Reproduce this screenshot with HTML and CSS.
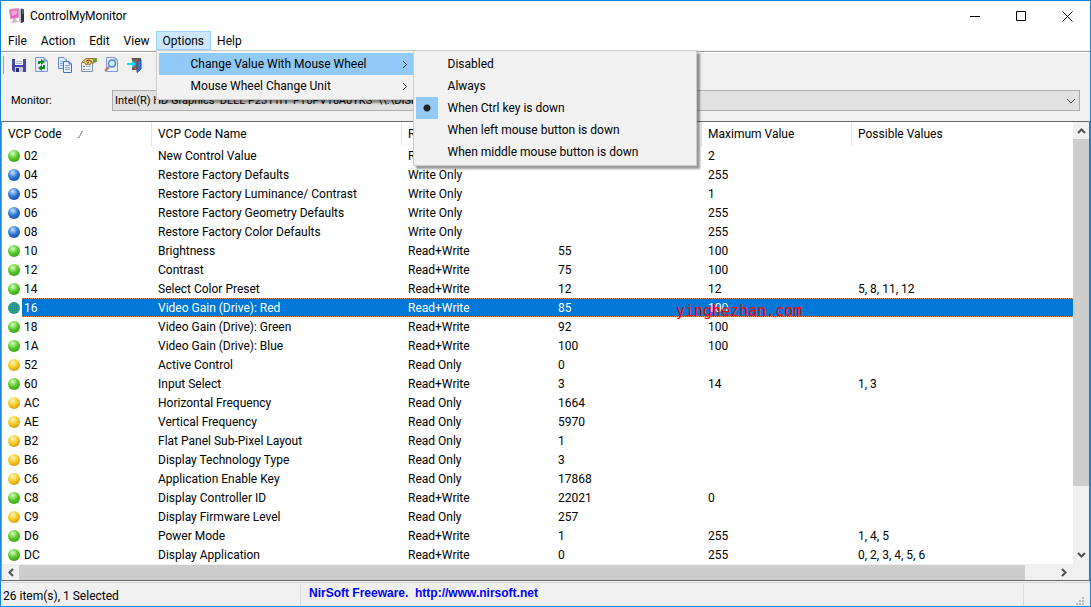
FILE: index.html
```html
<!DOCTYPE html>
<html lang="en">
<head>
    <meta charset="UTF-8">
    <meta name="viewport" content="width=device-width, initial-scale=1.0">
    <title>ControlMyMonitor</title>
    <link rel="stylesheet" href="styles.css">
</head>
<body>

    <header class="title-bar">
        <svg class="app-icon" width="16" height="16" viewBox="0 0 16 16">
            <path d="M0.5 1.5L9.5 0.5V9.5L1.5 11Z" fill="#f060b8" stroke="#dc9cc8"/>
            <path d="M2 3L8 2V6L3 8Z" fill="#f8a0dc"/>
            <path d="M4 11L7 10.5L8 13L10 14L3 15L2 14L4 13Z" fill="#d0b4c8"/>
            <path d="M10 1L12 0.5V15L10 14Z" fill="#b9c6c9"/>
            <path d="M12 0.5L15 1.5V14L12 15Z" fill="#243a4c"/>
            <path d="M13 3H14.5M13 5H14.5" stroke="#58b6a0"/>
        </svg>
        <h1>ControlMyMonitor</h1>
        <div class="window-buttons">
            <button aria-label="Minimize"><svg width="11" height="11"><path d="M0 5.5H10" stroke="#000"/></svg></button>
            <button aria-label="Maximize"><svg width="11" height="11"><path d="M0.5 0.5H9.5V9.5H0.5Z" fill="none" stroke="#000"/></svg></button>
            <button aria-label="Close"><svg width="11" height="11"><path d="M0.5 0.5L10.5 10.5M10.5 0.5L0.5 10.5" stroke="#000"/></svg></button>
        </div>
    </header>

    <nav class="menu-bar">
        <button>File</button>
        <button>Action</button>
        <button>Edit</button>
        <button>View</button>
        <div class="menu-holder">
            <button class="open">Options</button>
            <ul class="menu">
                <li class="active">
                    <button>Change Value With Mouse Wheel</button>
                    <svg class="chevron" width="6" height="9"><path d="M1 1L4.5 4.5L1 8" fill="none" stroke="#222"/></svg>
                    <ul class="menu submenu">
                        <li><button>Disabled</button></li>
                        <li><button>Always</button></li>
                        <li class="checked"><button>When Ctrl key is down</button></li>
                        <li><button>When left mouse button is down</button></li>
                        <li><button>When middle mouse button is down</button></li>
                    </ul>
                </li>
                <li>
                    <button>Mouse Wheel Change Unit</button>
                    <svg class="chevron" width="6" height="9"><path d="M1 1L4.5 4.5L1 8" fill="none" stroke="#222"/></svg>
                </li>
            </ul>
        </div>
        <button>Help</button>
    </nav>

    <div class="toolbar">
        <button aria-label="Save">
            <svg width="16" height="16" viewBox="0 0 16 16">
                <path d="M1 2H15V15H3L1 13Z" fill="#4646a8"/>
                <path d="M4 2H12V8H4Z" fill="#f4f4fa"/>
                <path d="M5 4.5H11M5 6.5H11" stroke="#b4b4cc"/>
                <path d="M4 10H12V15H4Z" fill="#c9c9dc"/>
                <path d="M5 11H8V15H5Z" fill="#2a2a7c"/>
            </svg>
        </button>
        <button aria-label="Refresh">
            <svg width="16" height="16" viewBox="0 0 16 16">
                <path d="M1.5 0.5H10L13.5 4V14.5H1.5Z" fill="#e0ecfc" stroke="#7d9ad6"/>
                <path d="M10 0.5V4H13.5" fill="#9bb8ea" stroke="#6f8fd0"/>
                <path d="M5 7V5H8" fill="none" stroke="#128a20" stroke-width="2"/>
                <path d="M7 2L11 5L7 8Z" fill="#128a20"/>
                <path d="M10 8V11H7" fill="none" stroke="#128a20" stroke-width="2"/>
                <path d="M8 8L4 11L8 14Z" fill="#128a20"/>
            </svg>
        </button>
        <button aria-label="Copy">
            <svg width="16" height="16" viewBox="0 0 16 16">
                <path d="M1.5 0.5H7L9.5 3V11.5H1.5Z" fill="#dce9fb" stroke="#6489d0"/>
                <path d="M3 4.5H8M3 6.5H8M3 8.5H8" stroke="#8eaee4"/>
                <path d="M6.5 4.5H12L14.5 7V15.5H6.5Z" fill="#e8f1fd" stroke="#4870c0"/>
                <path d="M12 4.5V7H14.5" fill="#9bb8ea" stroke="#4870c0"/>
                <path d="M8 8.5H13M8 10.5H13M8 12.5H13" stroke="#7ea2e0"/>
            </svg>
        </button>
        <button aria-label="Properties">
            <svg width="17" height="16" viewBox="0 0 17 16">
                <path d="M1.5 5.5H12.5V14.5H1.5Z" fill="#f1f4f8" stroke="#7890b0"/>
                <path d="M3 9.5H5M3 12.5H5" stroke="#466ba8"/>
                <path d="M6 9.5H11M6 12.5H11" stroke="#a7b5c6"/>
                <path d="M2 5L6 1.5H13L14 6L11 6L10 8L8 7L6 8L5 6Z" fill="#e8c46c" stroke="#9a7428"/>
                <path d="M6 4L9 3L12 5M7 6L9 5" fill="none" stroke="#6b4d18"/>
                <path d="M13 1H17V5L14 6Z" fill="#6a9a44"/>
            </svg>
        </button>
        <button aria-label="Find">
            <svg width="16" height="16" viewBox="0 0 16 16">
                <path d="M2.5 0.5H11L13.5 3V14.5H2.5Z" fill="#e6effc" stroke="#7d9ad6"/>
                <path d="M11 0.5V3H13.5" fill="#9bb8ea" stroke="#7d9ad6"/>
                <circle cx="8" cy="6.5" r="3.5" fill="#c8f0fc" stroke="#5c7cb8" stroke-width="1.5"/>
                <path d="M5 10L1 14" stroke="#b4745c" stroke-width="2"/>
            </svg>
        </button>
        <button aria-label="Exit">
            <svg width="16" height="16" viewBox="0 0 16 16">
                <path d="M4 1H14V13H12V3H7V13H5V2Z" fill="#665750"/>
                <path d="M7 3H12V13H7Z" fill="#a45c3c"/>
                <path d="M10 5L14 2.5V12L10 15.5Z" fill="#3c74d8" stroke="#244ea0"/>
                <path d="M0 6H5V3L9 7L5 11V8H0Z" fill="#16d4f4"/>
            </svg>
        </button>
    </div>

    <div class="monitor-bar">
        <label for="monitor">Monitor:</label>
        <div class="select-box">
            <select id="monitor">
                <option>Intel(R) HD Graphics&nbsp; DELL P2311H&nbsp; PT0PV16A0YKS&nbsp; \\.\DISPLAY1</option>
            </select>
            <svg width="10" height="6"><path d="M1 1L5 5L9 1" fill="none" stroke="#444"/></svg>
        </div>
    </div>

    <main class="list-view">
        <div class="list-content">
            <table>
                <thead>
                    <tr>
                        <th>VCP Code
                            <svg class="sort-mark" width="6" height="7"><path d="M0 6.5H2.5V4.5H3.5V2.5H4.5V0.5H6" fill="none" stroke="#999"/></svg>
                        </th>
                        <th class="wide">VCP Code Name</th>
                        <th>Read-Write</th>
                        <th></th>
                        <th>Maximum Value</th>
                        <th class="last">Possible Values</th>
                    </tr>
                </thead>
                <tbody id="vcp-rows">
                    <!-- Rows are filled in by the script -->
                </tbody>
            </table>
            <div class="watermark">yinghezhan.com</div>
        </div>
        <div class="scroll-v">
            <svg width="9" height="6"><path d="M1 5L4.5 1.5L8 5" fill="none" stroke="#505050" stroke-width="2"/></svg>
            <div class="track"><div class="thumb"></div></div>
            <svg width="9" height="6"><path d="M1 1L4.5 4.5L8 1" fill="none" stroke="#505050" stroke-width="2"/></svg>
        </div>
        <div class="scroll-h">
            <svg width="6" height="9"><path d="M5 1L1.5 4.5L5 8" fill="none" stroke="#505050" stroke-width="2"/></svg>
            <div class="track"><div class="thumb"></div></div>
            <svg width="6" height="9"><path d="M1 1L4.5 4.5L1 8" fill="none" stroke="#505050" stroke-width="2"/></svg>
        </div>
    </main>

    <footer class="status-bar">
        <span class="count">26 item(s), 1 Selected</span>
        <a href="http://www.nirsoft.net">NirSoft Freeware.&nbsp; http://www.nirsoft.net</a>
        <svg class="grip" width="8" height="8"><path d="M6 0H8V2H6ZM3 3H5V5H3ZM6 3H8V5H6ZM0 6H2V8H0ZM3 6H5V8H3ZM6 6H8V8H6Z" fill="#b8b8b8"/></svg>
    </footer>

    <script>
        const rows = [
            ["02", "New Control Value", "Read+Write", "", "2", ""],
            ["04", "Restore Factory Defaults", "Write Only", "", "255", ""],
            ["05", "Restore Factory Luminance/ Contrast", "Write Only", "", "1", ""],
            ["06", "Restore Factory Geometry Defaults", "Write Only", "", "255", ""],
            ["08", "Restore Factory Color Defaults", "Write Only", "", "255", ""],
            ["10", "Brightness", "Read+Write", "55", "100", ""],
            ["12", "Contrast", "Read+Write", "75", "100", ""],
            ["14", "Select Color Preset", "Read+Write", "12", "12", "5, 8, 11, 12"],
            ["16", "Video Gain (Drive): Red", "Read+Write", "85", "100", ""],
            ["18", "Video Gain (Drive): Green", "Read+Write", "92", "100", ""],
            ["1A", "Video Gain (Drive): Blue", "Read+Write", "100", "100", ""],
            ["52", "Active Control", "Read Only", "0", "", ""],
            ["60", "Input Select", "Read+Write", "3", "14", "1, 3"],
            ["AC", "Horizontal Frequency", "Read Only", "1664", "", ""],
            ["AE", "Vertical Frequency", "Read Only", "5970", "", ""],
            ["B2", "Flat Panel Sub-Pixel Layout", "Read Only", "1", "", ""],
            ["B6", "Display Technology Type", "Read Only", "3", "", ""],
            ["C6", "Application Enable Key", "Read Only", "17868", "", ""],
            ["C8", "Display Controller ID", "Read+Write", "22021", "0", ""],
            ["C9", "Display Firmware Level", "Read Only", "257", "", ""],
            ["D6", "Power Mode", "Read+Write", "1", "255", "1, 4, 5"],
            ["DC", "Display Application", "Read+Write", "0", "255", "0, 2, 3, 4, 5, 6"]
        ];
        const ballClass = { "Read+Write": "green", "Write Only": "blue", "Read Only": "yellow" };
        const tbody = document.getElementById("vcp-rows");

        rows.forEach(row => {
            const tr = document.createElement("tr");
            if (row[0] === "16") {
                tr.classList.add("selected");
            }
            row.forEach((text, i) => {
                const td = document.createElement("td");
                if (i === 0) {
                    const ball = document.createElement("span");
                    ball.classList.add("ball", ballClass[row[2]]);
                    td.appendChild(ball);
                }
                td.append(text);
                tr.appendChild(td);
            });
            tbody.appendChild(tr);
        });
    </script>
</body>
</html>
```
FILE: styles.css
```css
* {
    box-sizing: border-box;
}

body {
    font-family: Roboto, "Open Sans", sans-serif;
    font-size: 12px;
    color: #000;
    background-color: #f0f0f0;
    margin: 0;
    height: 100vh;
    display: flex;
    flex-direction: column;
    border: 1px solid #1883d7;
    overflow: hidden;
}

button {
    font: inherit;
    color: inherit;
    background: none;
    border: none;
    padding: 0;
}

.title-bar {
    display: flex;
    align-items: center;
    height: 30px;
    padding-left: 8px;
    gap: 5px;
    background-color: #fff;
}

.title-bar h1 {
    flex: 1;
    margin: 0;
    font-size: 12px;
    font-weight: normal;
}

.window-buttons {
    display: flex;
}

.window-buttons button {
    width: 46px;
    height: 29px;
}

.window-buttons svg {
    display: block;
    margin: auto;
}

.menu-bar {
    display: flex;
    height: 19px;
    padding-left: 1px;
    background-color: #fff;
}

.menu-bar > button,
.open {
    height: 19px;
    line-height: 18px;
    padding: 1px 6px 0;
}

.menu-bar > button:nth-child(-n+3) {
    padding-right: 8px;
}

.menu-holder {
    position: relative;
}

.open {
    padding: 1px 7px 0;
    background-color: #cce8ff;
    box-shadow: inset 0 0 0 1px #99d1ff;
}

.menu {
    position: absolute;
    left: 0;
    top: 100%;
    z-index: 1;
    width: 260px;
    margin: 0;
    padding: 2px;
    list-style: none;
    background-color: #f2f2f2;
    border: 1px solid #ccc;
    box-shadow: 3px 3px 2px rgba(0, 0, 0, 0.4);
}

.menu li {
    position: relative;
    display: flex;
    align-items: center;
    height: 22px;
    padding-right: 5px;
}

.menu li button {
    flex: 1;
    padding-left: 32px;
    text-align: left;
    white-space: nowrap;
}

.menu .active {
    background-color: #91c9f7;
}

.submenu {
    left: 100%;
    top: -3px;
    width: 284px;
    z-index: 2;
}

.checked::before {
    content: "";
    position: absolute;
    left: 0;
    width: 22px;
    height: 22px;
    background: radial-gradient(circle, #222 3px, #91c9f7 4px);
}

.toolbar {
    display: flex;
    align-items: center;
    gap: 7px;
    height: 31px;
    padding: 0 0 5px 2px;
    margin-top: 1px;
    border-top: 1px solid #a0a0a0;
    box-shadow: inset 0 1px 0 #fff;
}

.toolbar::before {
    content: "";
    width: 1px;
    height: 18px;
    background-color: #a0a0a0;
}

.toolbar svg {
    display: block;
}

.monitor-bar {
    display: flex;
    align-items: center;
    padding: 8px 10px 10px;
    font-size: 11px;
}

.monitor-bar label {
    width: 101px;
}

.select-box {
    position: relative;
    flex: 1;
    display: flex;
}

.select-box select {
    appearance: none;
    flex: 1;
    height: 21px;
    padding: 0 2px;
    font: inherit;
    color: inherit;
    background-color: #e1e1e1;
    border: 1px solid #adadad;
    border-radius: 0;
}

.select-box svg {
    position: absolute;
    right: 4px;
    top: 8px;
    pointer-events: none;
}

.list-view {
    flex: 1;
    display: grid;
    grid-template-columns: 1fr 16px;
    grid-template-rows: 1fr 16px;
    min-height: 0;
    border: 1px solid #696969;
    border-left: 1px solid #a0a0a0;
}

.list-content {
    position: relative;
    overflow: hidden;
    background-color: #fff;
}

table {
    width: 100%;
    table-layout: fixed;
    border-collapse: separate;
    border-spacing: 0;
}

th {
    width: 150px;
    height: 24px;
    padding: 0 6px;
    text-align: left;
    font-weight: normal;
    border-right: 1px solid #e5e5e5;
}

.wide {
    width: 250px;
}

.last {
    width: auto;
    border-right: none;
}

.sort-mark {
    margin-left: 12px;
}

td {
    height: 19px;
    padding: 1px 6px 0;
    line-height: 18px;
    white-space: nowrap;
}

.ball {
    display: inline-block;
    width: 12px;
    height: 12px;
    margin-right: 4px;
    border-radius: 50%;
    vertical-align: -2px;
}

.green {
    background: radial-gradient(circle at 40% 30%, #d8ffc0, #58c828 45%, #1e8a0c);
}

.blue {
    background: radial-gradient(circle at 40% 30%, #c8e4ff, #2c78d4 45%, #083488);
}

.yellow {
    background: radial-gradient(circle at 40% 30%, #fff8c0, #f8c820 45%, #c07c08);
}

.selected td {
    color: #fff;
    background:
        repeating-linear-gradient(90deg, #ff8728 0 1px, #0078d7 1px 2px) top / 100% 1px no-repeat,
        repeating-linear-gradient(90deg, #ff8728 0 1px, #0078d7 1px 2px) bottom / 100% 1px no-repeat,
        #0078d7;
}

.selected td:first-child {
    box-shadow: inset 20px 0 0 #fff;
}

.selected .ball {
    background:
        repeating-linear-gradient(90deg, rgba(0, 120, 215, 0.4) 0 1px, transparent 1px 2px),
        repeating-linear-gradient(rgba(0, 120, 215, 0.4) 0 1px, transparent 1px 2px),
        #48b030;
}

.watermark {
    position: absolute;
    left: 674px;
    top: 180px;
    font-family: "DejaVu Sans Mono", monospace;
    font-size: 15px;
    line-height: 18px;
    color: #f00;
}

.scroll-v,
.scroll-h {
    display: flex;
    align-items: center;
    gap: 5px;
}

.scroll-v {
    flex-direction: column;
    padding: 6px 0;
}

.scroll-h {
    padding: 0 6px;
}

.track {
    flex: 1;
}

.scroll-v .track {
    width: 16px;
}

.scroll-h .track {
    height: 15px;
}

.thumb {
    background-color: #cdcdcd;
}

.scroll-v .thumb {
    height: 85%;
}

.scroll-h .thumb {
    width: 97%;
    height: 100%;
}

.status-bar {
    display: flex;
    height: 24px;
    margin-top: 1px;
    padding: 1px 6px 1px 2px;
    border-top: 1px solid #d7d7d7;
}

.count {
    width: 298px;
    line-height: 24px;
    border-right: 1px solid #d7d7d7;
}

.status-bar a {
    flex: 1;
    padding-left: 8px;
    font-family: "Liberation Sans", Arial, sans-serif;
    font-size: 12px;
    font-weight: bold;
    line-height: 19px;
    color: #00f;
    text-decoration: none;
    border-right: 1px solid #d7d7d7;
}

.grip {
    align-self: flex-end;
    margin-left: 52px;
}
```
